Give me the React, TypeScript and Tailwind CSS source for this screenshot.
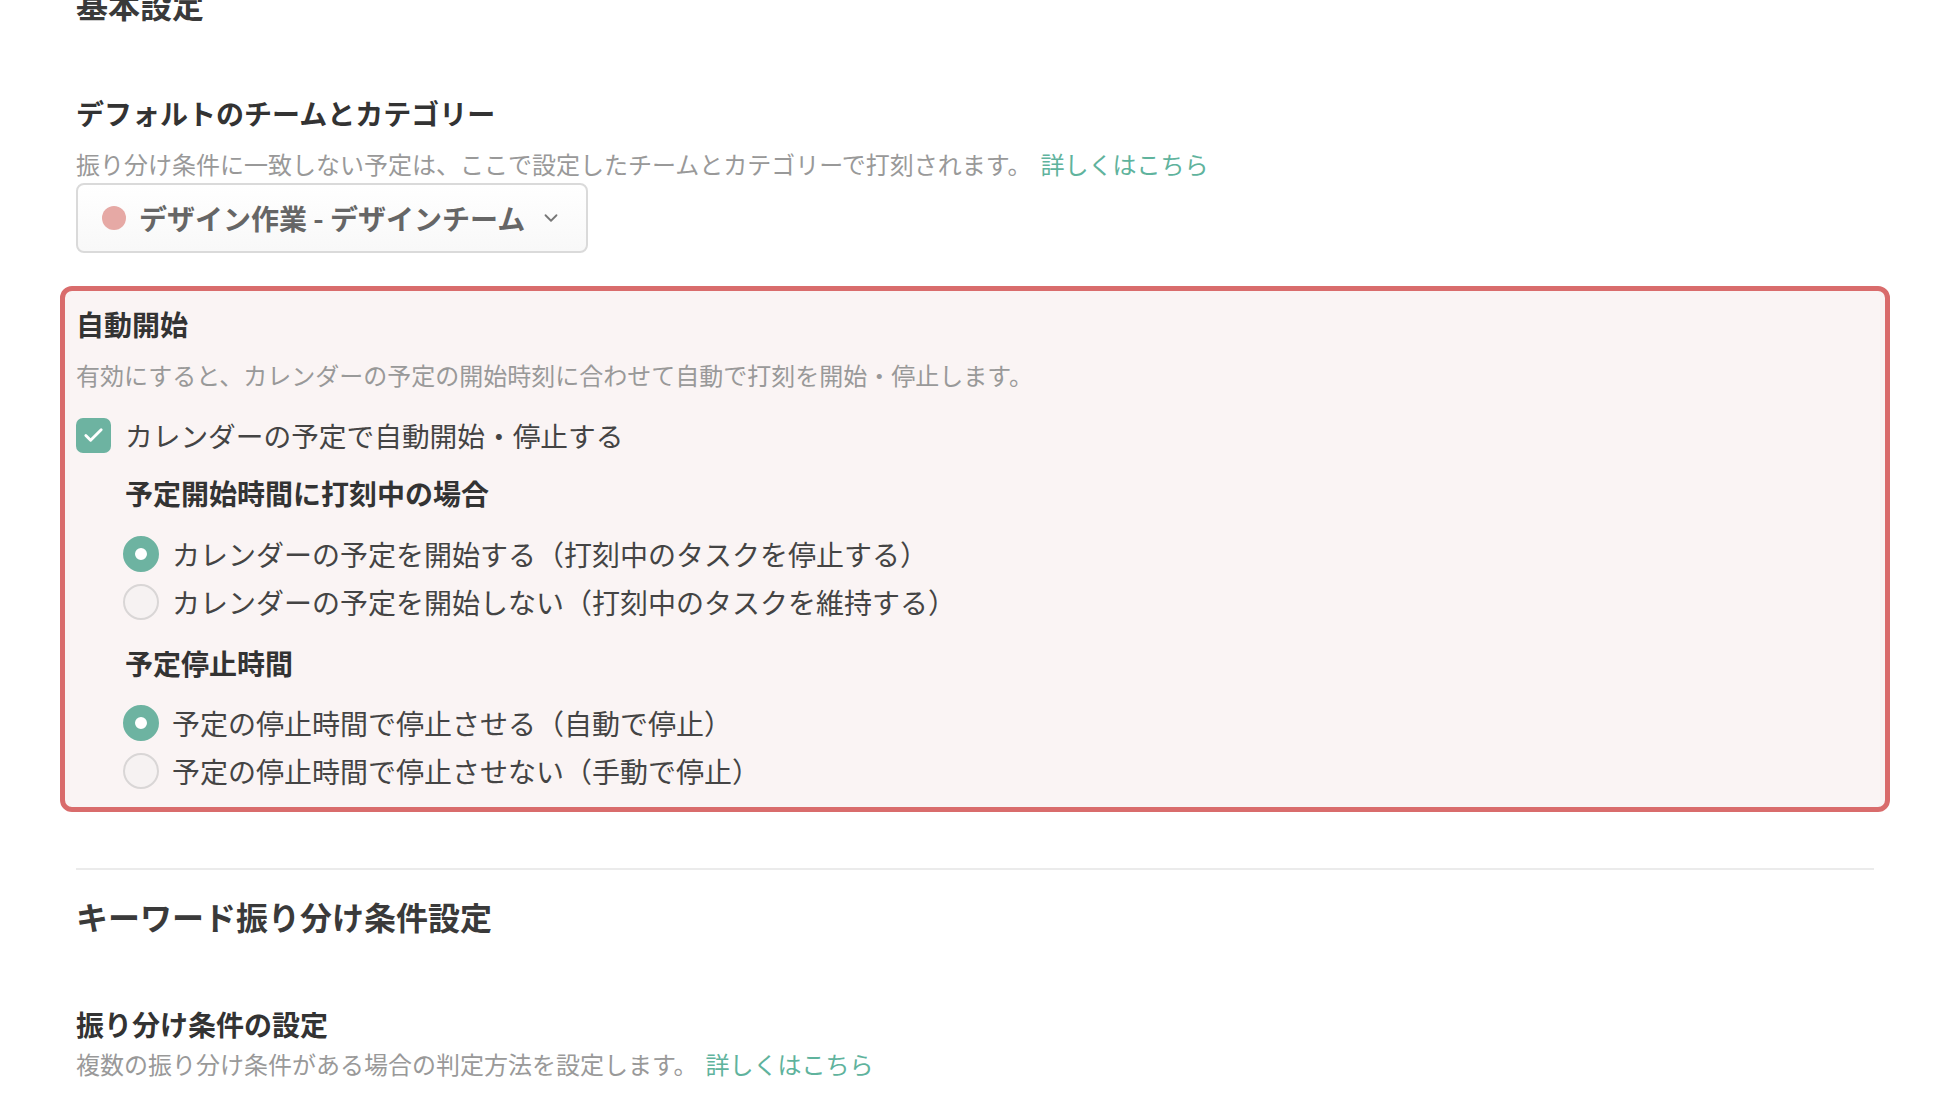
import { Check, ChevronDown } from "lucide-react";

const font = { fontFamily: '"Noto Sans CJK JP", "Noto Sans", sans-serif' };

function Radio({ checked, label }: { checked: boolean; label: string }) {
  return (
    <label className="flex items-center h-[40px] gap-[13px] cursor-pointer">
      {checked ? (
        <span className="w-[36px] h-[36px] rounded-full border-[12px] border-[#6db3a1] bg-white shrink-0" />
      ) : (
        <span className="w-[36px] h-[36px] rounded-full border-2 border-[#d9d6d6] bg-[#f6f2f2] shrink-0" />
      )}
      <span className="text-[28px] leading-[40px] text-[#444]">{label}</span>
    </label>
  );
}

export default function App() {
  return (
    <div className="min-h-screen bg-white overflow-hidden" style={font}>
      <main className="px-[76px]">
        {/* 基本設定 */}
        <h2 className="mt-[-18px] text-[32px] leading-[44px] font-bold text-[#3a3a3a]">基本設定</h2>

        <section className="mt-[67px]">
          <h3 className="text-[28px] leading-[40px] font-bold text-[#333]">デフォルトのチームとカテゴリー</h3>
          <p className="mt-[15px] text-[24px] leading-[32px] text-[#999]">
            振り分け条件に一致しない予定は、ここで設定したチームとカテゴリーで打刻されます。
            <a className="ml-[9px] text-[#5fb39d]">詳しくはこちら</a>
          </p>
          <button className="mt-[3px] w-[512px] h-[70px] flex items-center pl-[24px] pr-[24px] gap-[13px] rounded-[8px] border-2 border-[#dadada] bg-gradient-to-b from-white to-[#f8f8f8]">
            <span className="w-[24px] h-[24px] rounded-full bg-[#e6a9a5] shrink-0" />
            <span className="text-[28px] leading-[36px] font-bold text-[#666] whitespace-nowrap">デザイン作業 - デザインチーム</span>
            <ChevronDown className="w-[22px] h-[22px] text-[#777] ml-auto" strokeWidth={2} />
          </button>
        </section>

        {/* 自動開始 */}
        <section className="mt-[33px] -mx-[16px] px-[11px] pt-[13px] pb-[16px] border-[5px] border-[#d96c6c] rounded-[12px] bg-[#faf4f4]">
          <h3 className="text-[28px] leading-[40px] font-bold text-[#333]">自動開始</h3>
          <p className="mt-[15px] text-[24px] leading-[32px] text-[#999]">
            有効にすると、カレンダーの予定の開始時刻に合わせて自動で打刻を開始・停止します。
          </p>
          <label className="mt-[24px] flex items-center h-[40px] gap-[14px]">
            <span className="w-[35px] h-[35px] rounded-[7px] bg-[#6db3a1] flex items-center justify-center shrink-0">
              <Check className="w-[23px] h-[23px] text-white" strokeWidth={3} />
            </span>
            <span className="text-[27.7px] leading-[40px] text-[#444]">カレンダーの予定で自動開始・停止する</span>
          </label>

          <div className="pl-[49px]">
            <h4 className="mt-[18px] text-[28px] leading-[40px] font-bold text-[#333]">予定開始時間に打刻中の場合</h4>
            <div className="mt-[21px] flex flex-col gap-[8px] -ml-[2px]">
              <Radio checked label="カレンダーの予定を開始する（打刻中のタスクを停止する）" />
              <Radio checked={false} label="カレンダーの予定を開始しない（打刻中のタスクを維持する）" />
            </div>

            <h4 className="mt-[21px] text-[28px] leading-[40px] font-bold text-[#333]">予定停止時間</h4>
            <div className="mt-[20px] flex flex-col gap-[8px] -ml-[2px]">
              <Radio checked label="予定の停止時間で停止させる（自動で停止）" />
              <Radio checked={false} label="予定の停止時間で停止させない（手動で停止）" />
            </div>
          </div>
        </section>

        <hr className="mt-[56px] border-0 h-[2px] bg-[#ebebeb]" />

        {/* キーワード振り分け条件設定 */}
        <h2 className="mt-[24px] text-[32px] leading-[44px] font-bold text-[#3a3a3a]">キーワード振り分け条件設定</h2>

        <section className="mt-[66px]">
          <h3 className="text-[28px] leading-[40px] font-bold text-[#333]">振り分け条件の設定</h3>
          <p className="mt-[4px] text-[24px] leading-[32px] text-[#999]">
            複数の振り分け条件がある場合の判定方法を設定します。
            <a className="ml-[8px] text-[#5fb39d]">詳しくはこちら</a>
          </p>
        </section>
      </main>
    </div>
  );
}
